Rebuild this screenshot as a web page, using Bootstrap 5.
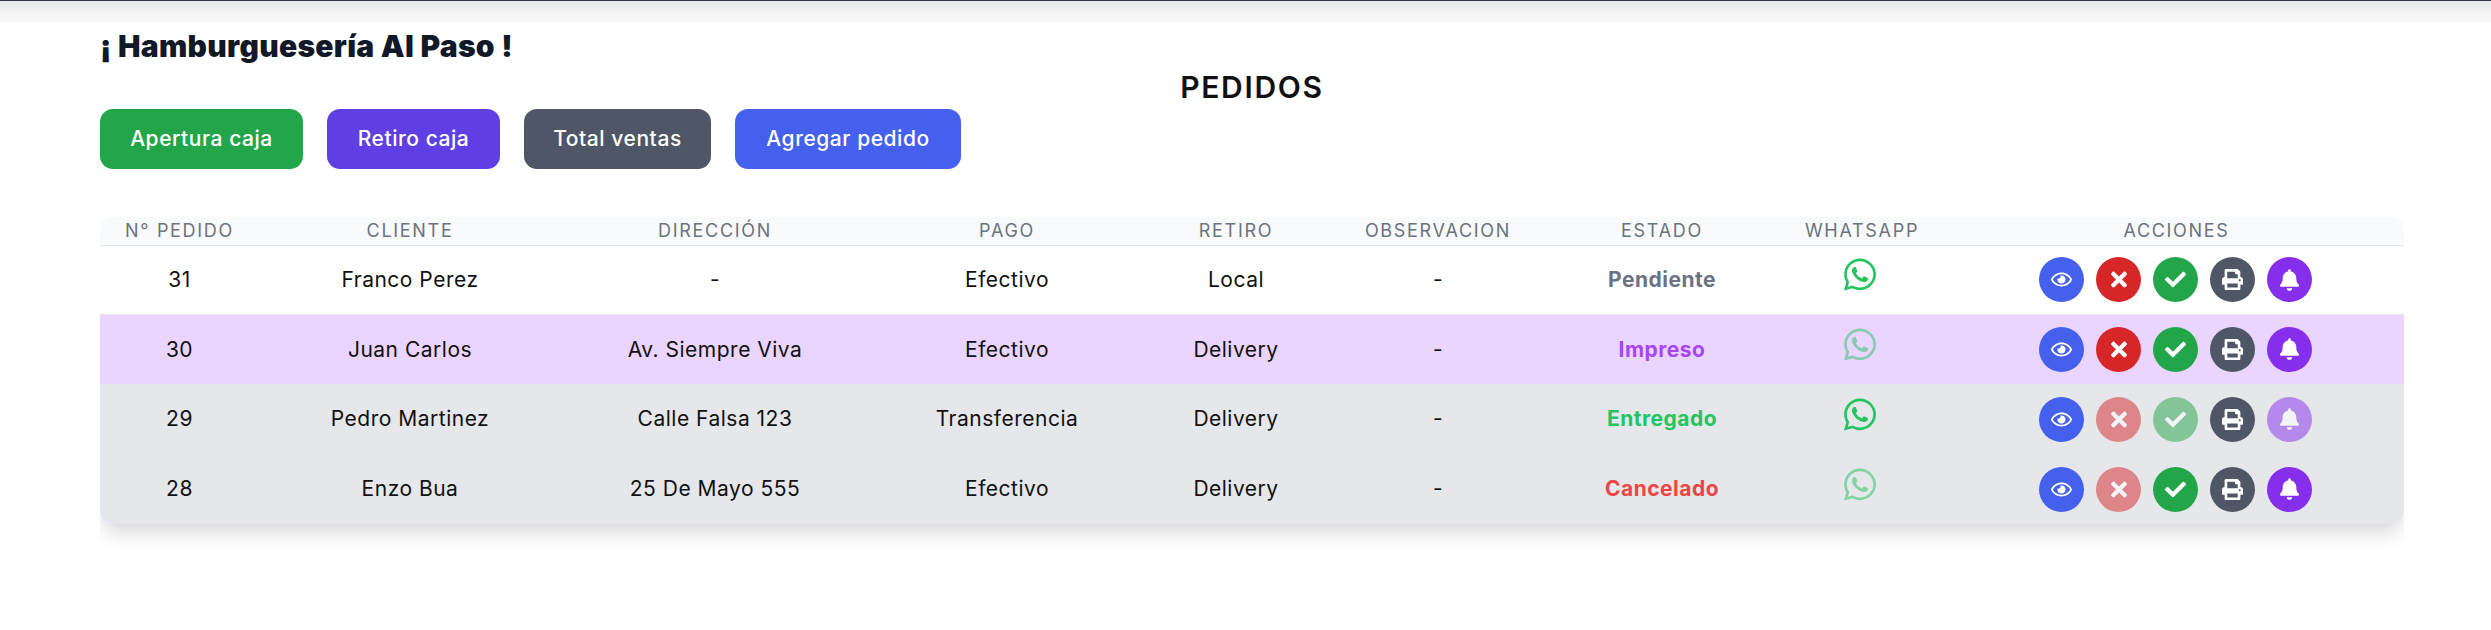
<!DOCTYPE html>
<html>

<head>
  <title>Pedidos</title>
  <link href="https://cdn.jsdelivr.net/npm/bootstrap@5.3.2/dist/css/bootstrap.min.css" rel="stylesheet">
  <script src="https://cdn.jsdelivr.net/npm/bootstrap@5.3.2/dist/js/bootstrap.bundle.min.js"></script>
  <style>
    body { font-family: Inter, "Liberation Sans", sans-serif; color: #111827; background: #fff; }
    .top-strip { height: 23px; background: linear-gradient(#e6e7e8 1px, #f0f0f1 8px, #fafafa 22px); border-top: 1px solid #2d3748; }
    .page-wrap { padding: 0 87px 0 100px; }
    .brand-title { font-size: 30px; font-weight: 900; line-height: 36px; margin: 5px 0 0; color: #111827; letter-spacing: .3px; }
    .page-title { font-size: 30px; font-weight: 600; line-height: 36px; margin: 5px 0 0; text-align: center; color: #111; letter-spacing: 1.7px; }
    .top-actions { margin-top: 4px; gap: 24px; }
    .action-btn { height: 60px; border: 0; border-radius: 13px; color: #fff; font-size: 21px; font-weight: 500; padding: 0; letter-spacing: .55px; }
    .action-btn:hover { color: #fff; }
    .btn-apertura { width: 203px; background: #23a54a; }
    .btn-retiro { width: 173px; background: #5f3fe4; }
    .btn-total { width: 187px; background: #4f5665; }
    .btn-agregar { width: 226px; background: #4460ec; }
    .table-clip { margin-top: 48px; height: 331px; overflow: hidden; }
    .table-box { border-radius: 13px; overflow: hidden; box-shadow: 0 12px 20px -4px rgba(0,0,0,.16); }
    .order-table { table-layout: fixed; margin: 0; width: 100%; text-align: center; }
    .order-table th { height: 28px; padding: 0; background: #f9fafb; color: #6b7280; font-size: 18px; font-weight: 400; letter-spacing: 1.7px; border-bottom: 1px solid #e5e7eb; vertical-align: middle; }
    .order-table td { height: 70px; padding: 0; font-size: 21px; font-weight: 400; letter-spacing: .5px; color: #111; vertical-align: middle; background: transparent; border: 0; }
    .order-table tr.row-normal td { height: 69px; background: #fff; border-bottom: 1px solid #e5e7eb; }
    .order-table tr.row-printed td { background: #e9d5ff; }
    .order-table tr.row-grey td { background: #e5e7eb; }
    .order-table td.state-pendiente { color: #6b7280; font-weight: 700; }
    .order-table td.state-impreso { color: #a845f5; font-weight: 700; }
    .order-table td.state-entregado { color: #22c55e; font-weight: 700; }
    .order-table td.state-cancelado { color: #ef4444; font-weight: 700; }
    .wa-link { display: block; width: 32px; height: 37px; margin: 0 auto 10px; position: relative; left: -2px; fill: #22c55e; }
    .wa-link.off { opacity: .5; }
    .circle-btn { width: 45px; height: 45px; padding: 0; border: 0; border-radius: 50%; color: #fff; }
    .circle-btn svg { fill: #fff; display: block; margin: 0 auto; }
    .circle-btn.off { opacity: .5; }
    .c-eye { background: #4460ec; }
    .c-x { background: #d72628; }
    .c-check { background: #23a54a; }
    .c-print { background: #4f5665; }
    .c-bell { background: #852eec; }
    .action-cell { gap: 12px; padding-right: 2px; }
  </style>
</head>

<body>
  <div class="top-strip"></div>

  <div class="page-wrap">
    <h1 class="brand-title">¡ Hamburguesería Al Paso !</h1>
    <h2 class="page-title">PEDIDOS</h2>

    <div class="d-flex top-actions">
      <button type="button" class="btn action-btn btn-apertura">Apertura caja</button>
      <button type="button" class="btn action-btn btn-retiro">Retiro caja</button>
      <button type="button" class="btn action-btn btn-total">Total ventas</button>
      <button type="button" class="btn action-btn btn-agregar">Agregar pedido</button>
    </div>

    <div class="table-clip">
      <div class="table-box">
        <table class="table order-table">
          <colgroup>
            <col style="width:159px"><col style="width:302px"><col style="width:308px"><col style="width:276px"><col style="width:182px"><col style="width:222px"><col style="width:226px"><col style="width:174px"><col>
          </colgroup>
          <thead>
            <tr>
              <th>N° PEDIDO</th>
              <th>CLIENTE</th>
              <th>DIRECCIÓN</th>
              <th>PAGO</th>
              <th>RETIRO</th>
              <th>OBSERVACION</th>
              <th>ESTADO</th>
              <th>WHATSAPP</th>
              <th>ACCIONES</th>
            </tr>
          </thead>
          <tbody id="orderRows"></tbody>
        </table>
      </div>
    </div>
  </div>

  <script>
    const orders = [
      {id: 31, client: "Franco Perez", address: "-", pay: "Efectivo", pickup: "Local", state: "Pendiente", rowClass: "row-normal", stateClass: "state-pendiente", waOff: false, off: []},
      {id: 30, client: "Juan Carlos", address: "Av. Siempre Viva", pay: "Efectivo", pickup: "Delivery", state: "Impreso", rowClass: "row-printed", stateClass: "state-impreso", waOff: true, off: []},
      {id: 29, client: "Pedro Martinez", address: "Calle Falsa 123", pay: "Transferencia", pickup: "Delivery", state: "Entregado", rowClass: "row-grey", stateClass: "state-entregado", waOff: false, off: ["x", "check", "bell"]},
      {id: 28, client: "Enzo Bua", address: "25 De Mayo 555", pay: "Efectivo", pickup: "Delivery", state: "Cancelado", rowClass: "row-grey", stateClass: "state-cancelado", waOff: true, off: ["x"]}
    ]

    const waPath = "M380.9 97.1C339 55.1 283.2 32 223.9 32c-122.4 0-222 99.6-222 222 0 39.1 10.2 77.3 29.6 111L0 480l117.7-30.9c32.4 17.7 68.9 27 106.1 27h.1c122.3 0 224.1-99.6 224.1-222 0-59.3-25.2-115-67.1-157zm-157 341.6c-33.2 0-65.7-8.9-94-25.7l-6.7-4-69.8 18.3L72 359.2l-4.4-7c-18.5-29.4-28.2-63.3-28.2-98.2 0-101.7 82.8-184.5 184.6-184.5 49.3 0 95.6 19.2 130.4 54.1 34.8 34.9 56.2 81.2 56.1 130.5 0 101.8-84.9 184.6-186.6 184.6zm101.2-138.2c-5.5-2.8-32.8-16.2-37.9-18-5.1-1.9-8.8-2.8-12.5 2.8-3.7 5.6-14.3 18-17.6 21.8-3.2 3.7-6.5 4.2-12 1.4-32.6-16.3-54-29.1-75.5-66-5.7-9.8 5.7-9.1 16.3-30.3 1.8-3.7.9-6.9-.5-9.7-1.4-2.8-12.5-30.1-17.1-41.2-4.5-10.8-9.1-9.3-12.5-9.5-3.2-.2-6.9-.2-10.6-.2-3.7 0-9.7 1.4-14.8 6.9-5.1 5.6-19.4 19-19.4 46.3 0 27.3 19.9 53.7 22.6 57.4 2.8 3.7 39.1 59.7 94.8 83.8 35.2 15.2 49 16.5 66.6 13.9 10.7-1.6 32.8-13.4 37.4-26.4 4.6-13 4.6-24.1 3.2-26.4-1.3-2.5-5-3.9-10.5-6.6z"

    const icons = {
      eye: {box: "0 0 576 512", w: 21, h: 19, d: "M288 144a110.94 110.94 0 0 0-31.24 5 55.4 55.4 0 0 1 7.24 27 56 56 0 0 1-56 56 55.4 55.4 0 0 1-27-7.24A111.71 111.71 0 1 0 288 144zm284.52 97.4C518.29 135.59 410.93 64 288 64S57.68 135.64 3.48 241.41a32.35 32.35 0 0 0 0 29.19C57.71 376.41 165.07 448 288 448s230.32-71.64 284.52-177.41a32.35 32.35 0 0 0 0-29.19zM288 400c-98.65 0-189.09-55-237.93-144C98.91 167 189.34 112 288 112s189.09 55 237.93 144C477.1 345 386.66 400 288 400z"},
      x: {box: "0 0 352 512", w: 16, h: 23, d: "M242.72 256l100.07-100.07c12.28-12.28 12.28-32.19 0-44.48l-22.24-22.24c-12.28-12.28-32.19-12.28-44.48 0L176 189.28 75.93 89.21c-12.28-12.28-32.19-12.28-44.48 0L9.21 111.45c-12.28 12.28-12.28 32.19 0 44.48L109.28 256 9.21 356.07c-12.28 12.28-12.28 32.19 0 44.48l22.24 22.24c12.28 12.28 32.2 12.28 44.48 0L176 322.72l100.07 100.07c12.28 12.28 32.2 12.28 44.48 0l22.24-22.24c12.28-12.28 12.28-32.19 0-44.48L242.72 256z"},
      check: {box: "0 0 512 512", w: 21, h: 21, d: "M173.898 439.404l-166.4-166.4c-9.997-9.997-9.997-26.206 0-36.204l36.203-36.204c9.997-9.998 26.207-9.998 36.204 0L192 312.69 432.095 72.596c9.997-9.997 26.207-9.997 36.204 0l36.203 36.204c9.997 9.997 9.997 26.206 0 36.204l-294.4 294.401c-9.998 9.997-26.207 9.997-36.204-.001z"},
      print: {box: "0 0 512 512", w: 21, h: 21, d: "M448 192V77.25c0-8.49-3.37-16.62-9.37-22.63L393.37 9.37c-6-6-14.14-9.37-22.63-9.37H96C78.33 0 64 14.33 64 32v160c-35.35 0-64 28.65-64 64v112c0 8.84 7.16 16 16 16h48v96c0 17.67 14.33 32 32 32h320c17.67 0 32-14.33 32-32v-96h48c8.84 0 16-7.16 16-16V256c0-35.35-28.65-64-64-64zm-64 256H128v-96h256v96zm0-224H128V64h192v48c0 8.84 7.16 16 16 16h48v96zm48 72c-13.25 0-24-10.75-24-24 0-13.26 10.75-24 24-24s24 10.74 24 24c0 13.25-10.75 24-24 24z"},
      bell: {box: "0 0 448 512", w: 19, h: 22, d: "M224 512c35.32 0 63.97-28.65 63.97-64H160.03c0 35.35 28.65 64 63.97 64zm215.39-149.71c-19.32-20.76-55.47-51.99-55.47-154.29 0-77.7-54.48-139.9-127.94-155.16V32c0-17.67-14.32-32-31.98-32s-31.98 14.33-31.98 32v20.84C118.56 68.1 64.08 130.3 64.08 208c0 102.3-36.15 133.53-55.47 154.29-6 6.45-8.66 14.16-8.61 21.71.11 16.4 12.98 32 32.1 32h383.8c19.12 0 32-15.6 32.1-32 .05-7.55-2.61-15.27-8.61-21.71z"}
    }

    function circleButton(name, order) {
      const icon = icons[name]
      const off = order.off.includes(name) ? " off" : ""
      return `<button type="button" class="btn circle-btn c-${name}${off}"><svg viewBox="${icon.box}" width="${icon.w}" height="${icon.h}"><path d="${icon.d}"/></svg></button>`
    }

    const orderRows = document.querySelector("#orderRows")
    let html = ""
    for (let i = 0; i < orders.length; i++) {
      const o = orders[i]
      html += `<tr class="${o.rowClass}">
        <td>${o.id}</td>
        <td>${o.client}</td>
        <td>${o.address}</td>
        <td>${o.pay}</td>
        <td>${o.pickup}</td>
        <td>-</td>
        <td class="${o.stateClass}">${o.state}</td>
        <td><svg class="wa-link${o.waOff ? " off" : ""}" viewBox="0 0 448 512"><path d="${waPath}"/></svg></td>
        <td><div class="d-flex justify-content-center action-cell">${["eye", "x", "check", "print", "bell"].map(n => circleButton(n, o)).join("")}</div></td>
      </tr>`
    }
    orderRows.innerHTML = html
  </script>
</body>

</html>
